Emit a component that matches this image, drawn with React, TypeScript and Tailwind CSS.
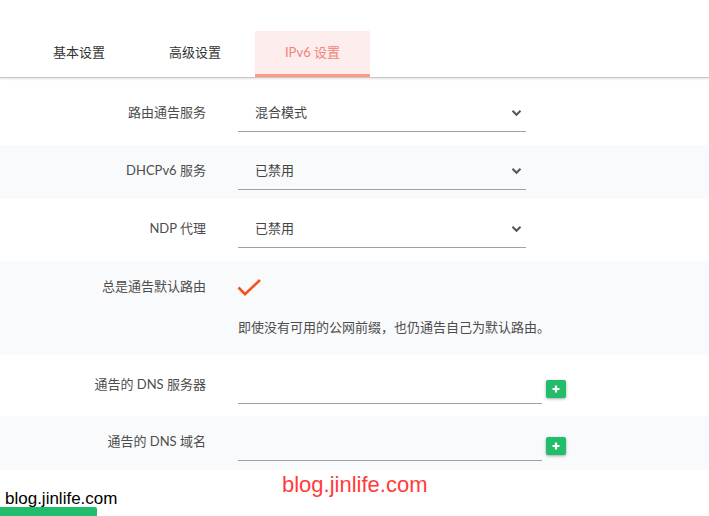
import React from "react";

const font = { fontFamily: 'Lato, "Noto Sans CJK SC", sans-serif' };

function Chevron() {
  return (
    <svg width="11" height="8" viewBox="0 0 11 8" className="block">
      <path d="M1.5 1.8 L5.5 5.8 L9.5 1.8" fill="none" stroke="#555" strokeWidth="2" />
    </svg>
  );
}

function PlusButton() {
  return (
    <button className="mt-[13px] ml-[4px] flex h-[18px] w-[20px] items-center justify-center rounded-[2px] bg-[#21bd6b] shadow-[0_1px_3px_rgba(0,0,0,0.35)]">
      <svg width="8" height="8" viewBox="0 0 8 8">
        <path d="M4 0.5 V7.5 M0.5 4 H7.5" stroke="#fff" strokeWidth="2.2" />
      </svg>
    </button>
  );
}

function Row({
  label,
  bg,
  h,
  pt,
  children,
}: {
  label: string;
  bg?: boolean;
  h: string;
  pt: string;
  children: React.ReactNode;
}) {
  return (
    <div className={`flex ${h} ${pt} ${bg ? "bg-[#f9fafc]" : "bg-white"}`}>
      <div className="flex h-[36px] w-[206px] shrink-0 items-center justify-end text-[13px] text-[#4d4d4d]">
        {label}
      </div>
      <div className="ml-[32px]">{children}</div>
    </div>
  );
}

function SelectField({ value }: { value: string }) {
  return (
    <div className="flex h-[37px] w-[288px] items-center justify-between border-b border-[#a0a0a0] pl-[17px] pr-[4px] text-[13px] text-[#444]">
      <span>{value}</span>
      <Chevron />
    </div>
  );
}

function ListField() {
  return (
    <div className="flex">
      <div className="h-[37px] w-[304px] border-b border-[#a0a0a0]" />
      <PlusButton />
    </div>
  );
}

export default function App() {
  const tabs = ["基本设置", "高级设置"];
  return (
    <div className="relative h-[516px] w-[709px] overflow-hidden bg-white" style={font}>
      {/* tab bar */}
      <div className="relative z-10 flex h-[78px] items-end border-b border-[#c8c8c8] bg-white pl-[21px] shadow-[0_1px_2px_rgba(0,0,0,0.12)]">
        {tabs.map((t) => (
          <div
            key={t}
            className="flex h-[46px] w-[116px] items-center justify-center pb-[3px] text-[13px] text-[#333]"
          >
            {t}
          </div>
        ))}
        <div className="ml-[2px] flex h-[46px] w-[115px] items-center justify-center border-b-[3px] border-[#ff9a85] bg-[#fdeded] text-[13px] text-[#f0837a]">
          IPv6 设置
        </div>
      </div>

      {/* settings rows */}
      <Row label="路由通告服务" h="h-[67px]" pt="pt-[17px]">
        <SelectField value="混合模式" />
      </Row>
      <Row label="DHCPv6 服务" bg h="h-[54px]" pt="pt-[8px]">
        <SelectField value="已禁用" />
      </Row>
      <Row label="NDP 代理" h="h-[62px]" pt="pt-[12px]">
        <SelectField value="已禁用" />
      </Row>
      <Row label="总是通告默认路由" bg h="h-[94px]" pt="pt-[8px]">
        <div className="flex h-[36px] items-center">
          <svg width="25" height="19" viewBox="0 0 25 19" className="-ml-[1px]">
            <path d="M1.5 9.5 L8 16.2 L23 2" fill="none" stroke="#f4511e" strokeWidth="2.6" />
          </svg>
        </div>
        <div className="mt-[13px] text-[13px] text-[#4d4d4d]">
          即使没有可用的公网前缀，也仍通告自己为默认路由。
        </div>
      </Row>
      <Row label="通告的 DNS 服务器" h="h-[61px]" pt="pt-[12px]">
        <ListField />
      </Row>
      <Row label="通告的 DNS 域名" bg h="h-[54px]" pt="pt-[8px]">
        <ListField />
      </Row>

      {/* footer */}
      <div
        className="pl-[5px] pt-[19px] text-[17px] leading-[19px] text-black"
        style={{ fontFamily: '"Liberation Sans", Arial, sans-serif' }}
      >
        blog.jinlife.com
      </div>
      <div className="mt-[-1px] h-[10px] w-[97px] rounded-tr-[2px] bg-[#21bd6b]" />

      <div
        className="absolute left-[282px] top-[472px] text-[22px] leading-[26px] text-[#ff3b3b]"
        style={{ fontFamily: '"Liberation Sans", Arial, sans-serif' }}
      >
        blog.jinlife.com
      </div>
    </div>
  );
}
